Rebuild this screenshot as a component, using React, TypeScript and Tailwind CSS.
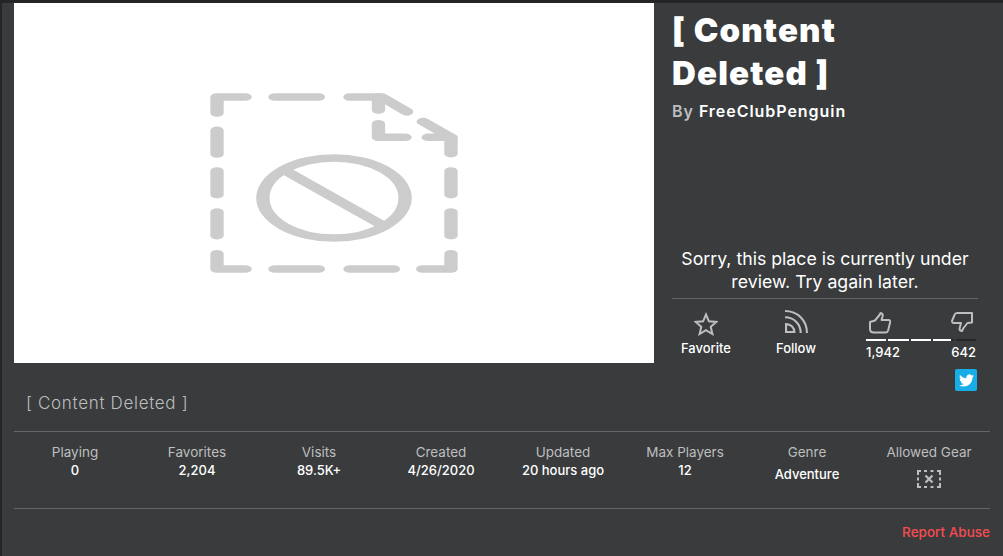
import type { ReactNode } from "react";

const stats = [
  { label: "Playing", value: "0" },
  { label: "Favorites", value: "2,204" },
  { label: "Visits", value: "89.5K+" },
  { label: "Created", value: "4/26/2020" },
  { label: "Updated", value: "20 hours ago" },
  { label: "Max Players", value: "12" },
];

// the placeholder is a square drawing stretched to 16:9, so the strokes get wider sideways
const DeletedImage = () => (
  <svg viewBox="0 0 360 360" preserveAspectRatio="none" className="block h-[360px] w-[640px]" fill="none" stroke="#cccccc" strokeWidth="7.5" strokeLinecap="round" strokeLinejoin="round">
    <path d="M130 94H114.200V110" />
    <path d="M114.200 127.300V151M114.200 168V191.700M114.200 209V232.700" />
    <path d="M114.200 250.700V266H130" />
    <path d="M146.800 266H171.200M189 266H213.400" />
    <path d="M229.900 266H245.800V250.700" />
    <path d="M245.800 232.700V209M245.800 191.700V168" />
    <path d="M245.800 150.700V134.300L230.200 118.700" />
    <path d="M233 134.300H245.800" />
    <path d="M146.800 94H171.200" />
    <path d="M189 94H206.800L220.900 108.700" />
    <path d="M205 94V107" />
    <path d="M205 120.700V134.300H220" />
    <circle cx="180" cy="195" r="40" />
    <path d="M152 167L208 223" strokeLinecap="butt" />
  </svg>
);

const Star = () => (
  <svg viewBox="0 0 24 24" className="h-6 w-6" fill="none" stroke="#bdbebe" strokeWidth="2">
    <path d="M12 2.500l2.900 6.800 7.400.6-5.600 4.900 1.700 7.200-6.400-3.800-6.400 3.800 1.700-7.200-5.600-4.900 7.400-.6z" />
  </svg>
);

const Rss = () => (
  <svg viewBox="0 0 22 22" className="-mt-[5px] h-[23px] w-[23px]" fill="none" stroke="#bdbebe" strokeWidth="2">
    <path d="M0 1c12 0 21 9 21 21" />
    <path d="M0 7c8.500 0 15 6.500 15 15" />
    <path d="M1 13.500c4.800 0 8 3.500 8 7.500H1z" />
  </svg>
);

const ThumbUp = () => (
  <svg viewBox="0 0 22 22" className="h-[22px] w-[22px]" fill="none" stroke="#bdbebe" strokeWidth="2" strokeLinejoin="round">
    <path d="M1 10l5-1.500L10.500 3l1-2c2 0 2.500 1.500 2 3.500l-1 3.500h7c1.500 0 2 1.200 1.600 2.500l-2 8c-.4 1.300-1 2-2.600 2H5c-2.500 0-4-1.200-4-3.500z" />
  </svg>
);

const ThumbDown = () => (
  <svg viewBox="0 0 22 20" className="h-5 w-[22px]" fill="none" stroke="#bdbebe" strokeWidth="2" strokeLinejoin="round">
    <path d="M6 1h15v9.500l-4.500.5-4 5-1.500 3c-2 0-2.800-1.200-2.300-3l1.300-5H3c-1.500 0-2.300-1-1.800-2.500L3.500 3C4 1.500 5 1 6 1z" />
  </svg>
);

const Twitter = () => (
  <svg viewBox="0 0 24 24" className="h-[15px] w-[15px]" fill="#ffffff">
    <path d="M23.950 4.570a10 10 0 0 1-2.820.77 4.960 4.960 0 0 0 2.160-2.720c-.95.560-2 .96-3.130 1.190a4.920 4.920 0 0 0-8.380 4.480C7.690 8.090 4.070 6.130 1.640 3.160a4.820 4.820 0 0 0-.67 2.480c0 1.710.87 3.210 2.190 4.090a4.900 4.900 0 0 1-2.230-.62v.06a4.920 4.920 0 0 0 3.950 4.830 4.900 4.900 0 0 1-2.210.08 4.940 4.940 0 0 0 4.600 3.420A9.870 9.870 0 0 1 0 19.540a13.940 13.940 0 0 0 7.550 2.210c9.060 0 14-7.500 14-13.990 0-.21 0-.42-.02-.63a10 10 0 0 0 2.420-2.560z" />
  </svg>
);

const GearOff = () => (
  <svg viewBox="0 0 24 18" className="h-[18px] w-6" fill="none" stroke="#bdbebe" strokeWidth="2">
    <path d="M1 5V1h3M7 1h3M13.500 1h3M20 1h3v4M23 7.500v3M23 13v4h-3M16.500 17h-3M10 17H7M4 17H1v-4M1 10.500v-3" />
    <path d="M8.500 5.500l7 7M15.500 5.500l-7 7" strokeWidth="2.200" />
  </svg>
);

const Action = ({ icon, label, className }: { icon: ReactNode; label: string; className: string }) => (
  <div className={`flex w-[68px] flex-col items-center ${className}`}>
    <div className="flex h-6 items-center">{icon}</div>
    <div className="mt-[3px] text-[13px] leading-[18px] font-medium text-white">{label}</div>
  </div>
);

export default function App() {
  return (
    <div className="h-[556px] w-full overflow-hidden bg-[#232527] pt-[3px] pl-[2px] font-['Inter','Noto_Sans',sans-serif]">
      <div className="h-full bg-[#393b3d] px-3">
        <div className="flex items-start">
          <div className="h-[360px] w-[640px] shrink-0 bg-white">
            <DeletedImage />
          </div>
          <div className="ml-[18px] w-[306px]">
            <h1 className="mt-[6px] max-w-[210px] text-[33px] leading-[43px] font-black tracking-[0.035em] text-white">[ Content Deleted ]</h1>
            <p className="mt-[5px] text-[16px] leading-[22px] font-semibold tracking-[0.06em] text-[#bdbebe]">
              By <span className="text-white">FreeClubPenguin</span>
            </p>
            <p className="mt-[125px] text-center text-[17.700px] leading-[23px] font-normal text-white">Sorry, this place is currently under review. Try again later.</p>
            <div className="mt-[5px] border-t border-[#656668]" />
            <div className="mt-[13px] flex items-start">
              <Action icon={<Star />} label="Favorite" className="" />
              <Action icon={<Rss />} label="Follow" className="ml-[22px]" />
              <div className="ml-[36px] w-[110px]">
                <div className="flex h-[22px] justify-between px-[3px]">
                  <ThumbUp />
                  <ThumbDown />
                </div>
                <div className="mt-[5px] flex gap-[2px]">
                  <div className="h-[2px] flex-1 bg-white" />
                  <div className="h-[2px] flex-1 bg-white" />
                  <div className="h-[2px] flex-1 bg-white" />
                  <div className="h-[2px] flex-1 bg-[#232527]">
                    <div className="h-full w-[85%] bg-white" />
                  </div>
                  <div className="h-[2px] flex-1 bg-[#232527]" />
                </div>
                <div className="mt-[2px] flex justify-between text-[13px] leading-[18px] font-medium text-white">
                  <span>1,942</span>
                  <span>642</span>
                </div>
              </div>
            </div>
            <div className="mt-[8px] flex justify-end pr-[1px]">
              <div className="flex h-[22px] w-[22px] items-center justify-center rounded-[2px] bg-[#18ade6]">
                <Twitter />
              </div>
            </div>
          </div>
        </div>
        <p className="mt-[2px] pl-3 text-[17px] leading-[20px] font-light tracking-[0.04em] text-[#bdbebe]">[ Content Deleted ]</p>
        <div className="mt-[18px] grid w-[976px] grid-cols-8 border-y border-[#656668] pt-[11px] pb-[20px] text-center text-[13.500px] leading-[18px]">
          {stats.map((s) => (
            <div key={s.label}>
              <div className="text-[#bdbebe]">{s.label}</div>
              <div className="text-[13px] font-medium text-white">{s.value}</div>
            </div>
          ))}
          <div>
            <div className="text-[#bdbebe]">Genre</div>
            <div className="mt-[4px] text-[13px] font-medium text-white">Adventure</div>
          </div>
          <div>
            <div className="text-[#bdbebe]">Allowed Gear</div>
            <div className="mt-[9px] flex justify-center">
              <GearOff />
            </div>
          </div>
        </div>
        <div className="mt-[14px] w-[976px] text-right text-[13.500px] leading-[18px] font-medium text-[#f74b52]">Report Abuse</div>
      </div>
    </div>
  );
}
